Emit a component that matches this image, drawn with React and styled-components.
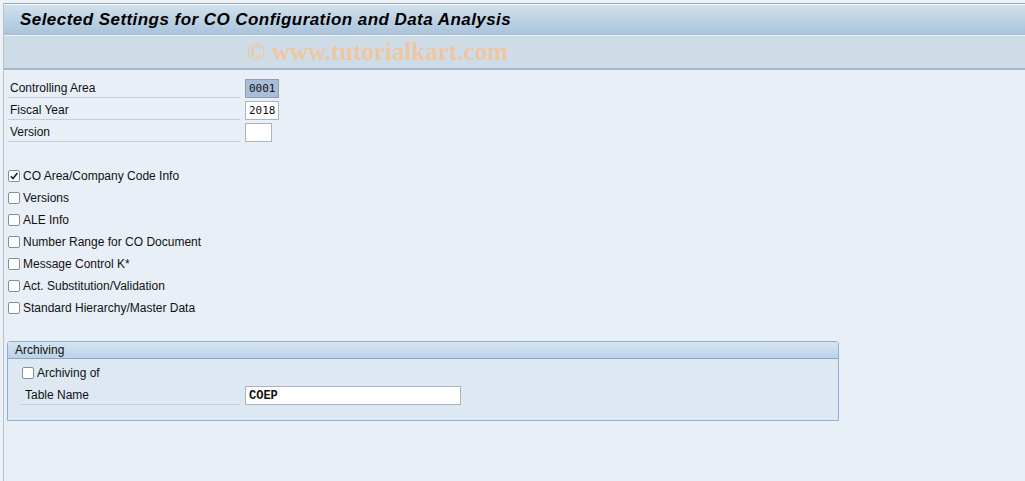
import React from "react";
import styled, { createGlobalStyle } from "styled-components";

const Global = createGlobalStyle`
  html, body { margin: 0; padding: 0; background: #eef1f5; }
  body { font-family: "Liberation Sans", Arial, sans-serif; }
`;

const Page = styled.div`
  width: 1025px;
  height: 481px;
  padding-top: 3px;
  box-sizing: border-box;
  display: flex;
  flex-direction: column;
  overflow: hidden;
`;

const Frame = styled.div`
  margin-left: 3px;
  flex: 1;
  display: flex;
  flex-direction: column;
  border-left: 1px solid #b4c2d0;
`;

const TitleBar = styled.div`
  height: 32px;
  box-sizing: border-box;
  border-top: 1px solid #98a8b8;
  box-shadow: inset 0 1px 0 #f4f8fb;
  background: linear-gradient(#d2e1ed, #a9c3db);
  display: flex;
  align-items: center;
  padding-left: 16px;
  font: italic bold 17px "Liberation Sans", Arial, sans-serif;
  letter-spacing: 0.45px;
  color: #000;
`;

const Toolbar = styled.div`
  height: 35px;
  box-sizing: border-box;
  border-top: 1px solid #eef4f9;
  border-bottom: 2px solid #a6b6c8;
  background: #cedce8;
  display: flex;
  align-items: center;
  padding-left: 243px;
`;

const Watermark = styled.span`
  font: bold 25px "Liberation Serif", "Times New Roman", serif;
  color: #eec7a2;
  white-space: nowrap;
`;

const Body = styled.div`
  flex: 1;
  background: #e8eff7;
  padding: 7px 0 0 0;
`;

const FieldRow = styled.div`
  display: flex;
  align-items: center;
  height: 22px;
  padding-left: ${(p) => p.$indent ?? 4}px;
`;

const Label = styled.div`
  width: ${(p) => p.$w}px;
  height: 21px;
  box-sizing: border-box;
  border-bottom: 1px solid #c3ced9;
  padding-left: ${(p) => p.$pad || 2}px;
  padding-top: 1px;
  display: flex;
  align-items: center;
  font-size: 12px;
  color: #111;
  margin-right: 5px;
  align-self: flex-start;
`;

const Input = styled.div`
  width: ${(p) => p.$w}px;
  height: 19px;
  box-sizing: border-box;
  border: 1px solid ${(p) => (p.$hl ? "#8d9fb4" : "#a8b4c0")};
  background: ${(p) => (p.$hl ? "#a9bdd6" : "#fff")};
  font: ${(p) => (p.$bold ? "bold 12px \"Liberation Mono\", monospace" : "11px \"DejaVu Sans Mono\", monospace")};
  color: #111;
  padding-left: 3px;
  display: flex;
  align-items: center;
  align-self: flex-start;
  margin-top: 2px;
`;

const Spacer = styled.div`
  height: ${(p) => p.$h}px;
`;

const CheckRow = styled.label`
  display: flex;
  align-items: center;
  height: 22px;
  font-size: 12px;
  color: #111;
  padding-left: ${(p) => p.$indent ?? 4}px;
`;

const Box = styled.span`
  width: 12px;
  height: 12px;
  box-sizing: border-box;
  border: 1px solid #858f9b;
  border-radius: 2px;
  background: #fff;
  margin-right: 3px;
  display: inline-flex;
  align-items: center;
  justify-content: center;
`;

const Group = styled.div`
  margin: 22px 0 0 3px;
  width: 832px;
  height: 80px;
  box-sizing: border-box;
  border: 1px solid #8fb0d4;
  border-radius: 3px 3px 0 0;
  background: #dde8f3;
  display: flex;
  flex-direction: column;
`;

const GroupHead = styled.div`
  height: 16px;
  border-bottom: 1px solid #86a8cf;
  background: linear-gradient(#d6e4f1, #bcd2e8);
  font-size: 12px;
  color: #111;
  padding-left: 7px;
  display: flex;
  align-items: center;
`;

const GroupBody = styled.div`
  padding-top: 3px;
`;

const Check = ({ checked, children, indent }) => (
  <CheckRow $indent={indent}>
    <Box>
      {checked && (
        <svg width="10" height="10" viewBox="0 0 10 10">
          <path d="M1.8 5.2 L4 7.6 L8.4 2" fill="none" stroke="#222" strokeWidth="1.6" />
        </svg>
      )}
    </Box>
    {children}
  </CheckRow>
);

const options = [
  ["CO Area/Company Code Info", true],
  ["Versions", false],
  ["ALE Info", false],
  ["Number Range for CO Document", false],
  ["Message Control K*", false],
  ["Act. Substitution/Validation", false],
  ["Standard Hierarchy/Master Data", false],
];

export default function App() {
  return (
    <>
      <Global />
      <Page>
        <Frame>
          <TitleBar>Selected Settings for CO Configuration and Data Analysis</TitleBar>
          <Toolbar>
            <Watermark>© www.tutorialkart.com</Watermark>
          </Toolbar>
          <Body>
            <FieldRow>
              <Label $w={232}>Controlling Area</Label>
              <Input $w={34} $hl>0001</Input>
            </FieldRow>
            <FieldRow>
              <Label $w={232}>Fiscal Year</Label>
              <Input $w={34}>2018</Input>
            </FieldRow>
            <FieldRow>
              <Label $w={232}>Version</Label>
              <Input $w={27}></Input>
            </FieldRow>
            <Spacer $h={22} />
            {options.map(([t, c]) => (
              <Check key={t} checked={c}>
                {t}
              </Check>
            ))}
            <Group>
              <GroupHead>Archiving</GroupHead>
              <GroupBody>
                <Check indent={14}>Archiving of</Check>
                <FieldRow $indent={12}>
                  <Label $w={220} $pad={5}>Table Name</Label>
                  <Input $w={216} $bold>COEP</Input>
                </FieldRow>
              </GroupBody>
            </Group>
          </Body>
        </Frame>
      </Page>
    </>
  );
}
